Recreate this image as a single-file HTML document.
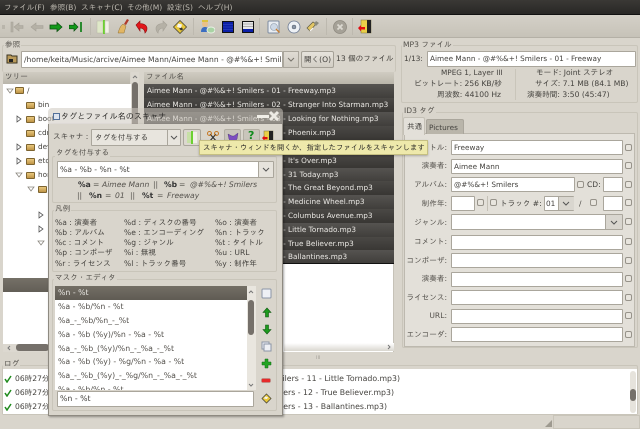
<!DOCTYPE html>
<html><head><meta charset="utf-8"><style>
html,body{margin:0;padding:0;background:#d9d5cc}
#r{position:relative;width:640px;height:429px;overflow:hidden;background:#d9d5cc;filter:blur(.3px);font-family:"DejaVu Sans","IPAGothic","Noto Sans CJK JP",sans-serif;font-size:7.3px;color:#45433f;text-rendering:geometricPrecision}
#r div,#r svg{position:absolute;box-sizing:border-box}
.t{white-space:nowrap;line-height:10px;height:10px}
.j{font-size:7.6px}
.in{background:#fff;border:1px solid #aaa69c;border-radius:1px}
.g{border:1px solid #c9c5ba;border-radius:2px}
.l{background:#d9d5cc;padding:0 1px;color:#55524d}
.ck{width:7px;height:7px;background:#e8e5de;border:1px solid #97938a;border-radius:2px}
.row{left:144px;width:250px;height:14px;background:linear-gradient(#555350,#403e3b);color:#e8e6e2;padding-left:3px;line-height:14px;white-space:nowrap;overflow:hidden}
.r2{background:linear-gradient(#4a4845,#383633)}
.sep{width:1px;background:#bdb9af}
.lb{text-align:right;width:50px;left:397px;color:#55524d}
.m{left:57px;color:#55524d;white-space:nowrap;line-height:10px;height:10px;font-size:7.8px}
.f{width:9px;height:7px;background:linear-gradient(#e8c87e,#bf9447);border:1px solid #7d6430;border-radius:1px}
.lg{font-size:7.8px}
.p{white-space:nowrap;line-height:10px;height:10px;color:#55524d;font-size:7.6px}
.pb{white-space:nowrap;line-height:10px;height:10px;color:#333;font-weight:bold;font-size:7.6px}
.pi{white-space:nowrap;line-height:10px;height:10px;color:#55524d;font-style:italic;font-size:7.6px}
</style></head><body><div id="r">

<!-- menubar -->
<div style="left:0;top:0;width:640px;height:15px;background:linear-gradient(#3a3835,#282725);border-bottom:1px solid #111"></div>
<div class="t j" style="left:4px;top:3px;color:#bdb9b0">ファイル(F)</div>
<div class="t j" style="left:50px;top:3px;color:#bdb9b0">参照(B)</div>
<div class="t j" style="left:81px;top:3px;color:#bdb9b0">スキャナ(C)</div>
<div class="t j" style="left:127px;top:3px;color:#bdb9b0">その他(M)</div>
<div class="t j" style="left:167px;top:3px;color:#bdb9b0">設定(S)</div>
<div class="t j" style="left:198px;top:3px;color:#bdb9b0">ヘルプ(H)</div>

<!-- toolbar -->
<div style="left:0;top:15px;width:640px;height:23px;background:linear-gradient(#d4d0c7,#c6c2b8);border-bottom:1px solid #b4b0a6"></div>
<div style="left:2px;top:25px;width:3px;height:4px;background:#b9b5ab"></div>
<svg style="left:10px;top:21px" width="14" height="12"><path d="M1 1h2v10H1zM4 6l5-4v2.5h4v3H9V10z" fill="#b5b1a6" stroke="#a5a197" stroke-width=".6"/></svg>
<svg style="left:30px;top:21px" width="14" height="12"><path d="M1 6l5-4v2.5h7v3H6V10z" fill="#b5b1a6" stroke="#a5a197" stroke-width=".6"/></svg>
<svg style="left:49px;top:21px" width="14" height="12"><path d="M13 6L8 1.5V4H1v4h7v2.5z" fill="#139a1a" stroke="#0b4f10" stroke-width=".8"/></svg>
<svg style="left:69px;top:21px" width="14" height="12"><path d="M9 6L5 2v2.2H0v3.6h5V10z" fill="#139a1a" stroke="#0b4f10" stroke-width=".7"/><rect x="11" y="1" width="2" height="10" fill="#2b8a30"/></svg>
<div class="sep" style="left:90px;top:18px;height:17px"></div>
<svg style="left:96px;top:19px" width="14" height="16"><rect x="1" y="2" width="6" height="12" fill="#dfe8c8" stroke="#b8b6a5" stroke-width=".5"/><rect x="7" y="1" width="2" height="14" fill="#6cd031"/><rect x="9" y="2" width="4" height="12" fill="#f1f0e6" stroke="#c3c1b2" stroke-width=".5"/></svg>
<svg style="left:116px;top:18px" width="14" height="16"><path d="M11 1l2 1-3 5-2-1z" fill="#b03a2a"/><path d="M7 6l3 2-2 7H2c1-3 2-7 5-9z" fill="#e2b664" stroke="#8f7035" stroke-width=".5"/></svg>
<svg style="left:135px;top:20px" width="14" height="14"><path d="M1 5l4-4v2.5c4 0 7 2 7 5 0 2-1 3.500-2 4.500 0-3-2-5-5-5V11z" fill="#e2161a" stroke="#8e0e10" stroke-width=".6"/></svg>
<svg style="left:154px;top:20px" width="14" height="14"><path d="M13 5L9 1v2.500c-4 0-7 2-7 5 0 2 1 3.500 2 4.500 0-3 2-5 5-5V11z" fill="#b5b1a6" stroke="#a5a197" stroke-width=".6"/></svg>
<svg style="left:173px;top:20px" width="14" height="14"><path d="M7 .5L13.500 7 7 13.500.5 7z" fill="#e9c83a" stroke="#4d4a38" stroke-width=".8"/><path d="M5 3.500L9 4.500 8 8 4 7z" fill="#f4f4f4"/><path d="M6 8.500l3-1 1 2-2 1z" fill="#333"/></svg>
<div class="sep" style="left:193px;top:18px;height:17px"></div>
<svg style="left:199px;top:18px" width="16" height="17"><circle cx="6" cy="6" r="3" fill="#eac188"/><path d="M3 4h6V2H3z" fill="#dcc23e"/><path d="M2 14c0-4 2-5 4-5s4 1 4 5z" fill="#3b6dc0"/><ellipse cx="12" cy="12" rx="4" ry="3" fill="#a9d3a4" stroke="#e8efe4"/></svg>
<svg style="left:222px;top:21px" width="12" height="12"><rect width="12" height="12" fill="#111"/><rect x="1" y="1" width="10" height="10" fill="#0c20a8"/><path d="M1 3.500h10M1 6h10M1 8.500h10" stroke="#3a4fc8" stroke-width=".6"/></svg>
<svg style="left:242px;top:21px" width="12" height="12"><rect width="12" height="12" fill="#111"/><rect x="1" y="1" width="10" height="7" fill="#e8e8e8"/><rect x="1" y="8" width="10" height="3" fill="#0c20a8"/><path d="M1 3h10M1 5.500h10" stroke="#777" stroke-width=".6"/></svg>
<div class="sep" style="left:259px;top:18px;height:17px"></div>
<svg style="left:267px;top:20px" width="14" height="14"><rect x="1" y="1" width="11" height="12" rx="1" fill="#e9edf2" stroke="#7d8ba0"/><circle cx="7" cy="7" r="3.500" fill="#cdd8e6" stroke="#8a97a8" stroke-width=".6"/><path d="M9 9l3.500 3.500" stroke="#c97d2d" stroke-width="1.400"/></svg>
<svg style="left:287px;top:20px" width="14" height="14"><circle cx="7" cy="7" r="6" fill="#eef1f5" stroke="#6a7890" stroke-width=".8"/><circle cx="7" cy="7" r="2" fill="#8c98a8" stroke="#505a68" stroke-width=".5"/></svg>
<svg style="left:306px;top:20px" width="14" height="14"><path d="M1 8l6-6 3 2-6 7z" fill="#e3c765" stroke="#5d5a42" stroke-width=".7"/><path d="M10 1l3 2-3 3-2-2z" fill="#8a8b7d"/><path d="M4 11l3-3" stroke="#fff"/></svg>
<div class="sep" style="left:326px;top:18px;height:17px"></div>
<svg style="left:333px;top:20px" width="14" height="14"><circle cx="7" cy="7" r="6.500" fill="#a5a197" stroke="#8f8b81" stroke-width=".8"/><path d="M4.500 4.500l5 5m0-5l-5 5" stroke="#dcd9d1" stroke-width="1.800"/></svg>
<div class="sep" style="left:352px;top:18px;height:17px"></div>
<svg style="left:358px;top:19px" width="14" height="15"><rect x="3" y="1" width="10" height="13" fill="#e9cf48" stroke="#7a7240" stroke-width=".5"/><rect x="9" y="1" width="4" height="13" fill="#222"/><path d="M0 9l3-3v2h4v2.500H3v2z" fill="#e00d10"/></svg>

<!-- browse group -->
<div class="g" style="left:2px;top:45px;width:394px;height:27px;border-bottom:0"></div>
<div class="t j l" style="left:4px;top:40px">参照</div>
<svg style="left:6px;top:54px" width="12" height="10"><path d="M1 1h4l1 1h5v7H1z" fill="#b99a5a" stroke="#3c3421"/><path d="M3 5h4v3H3z" fill="#222"/></svg>
<div class="t in" style="left:21px;top:51px;width:262px;height:17px;line-height:15px;padding-left:2px;overflow:hidden;background:#fff;font-size:7.6px">/home/keita/Music/arcive/Aimee Mann/Aimee Mann - @#%&amp;+! Smilers</div>
<div style="left:283px;top:51px;width:16px;height:17px;background:linear-gradient(#dfdbd3,#cfcbc2);border:1px solid #aaa69c"></div>
<svg style="left:287px;top:57px" width="8" height="5"><path d="M1 1l3 3 3-3" fill="none" stroke="#77736b"/></svg>
<div class="t j" style="left:301px;top:51px;width:33px;height:17px;line-height:15px;background:linear-gradient(#e6e3dc,#d2cec5);border:1px solid #a5a197;border-radius:2px;text-align:center">開く(O)</div>
<div class="t j" style="left:336px;top:54px">13 個のファイル</div>

<!-- tree -->
<div style="left:3px;top:72px;width:127px;height:12px;background:linear-gradient(#d0ccc2,#b9b5aa)"></div>
<div class="t j" style="left:5px;top:72px;color:#55524d">ツリー</div>
<div style="left:3px;top:84px;width:128px;height:268px;background:#fff"></div>
<div style="left:131px;top:72px;width:8px;height:280px;background:#dcd8d0"></div>
<div style="left:132px;top:82px;width:6px;height:210px;background:#75706a;border-radius:3px"></div>
<svg style="left:132px;top:74px" width="6" height="5"><path d="M1 4l2-2 2 2" fill="none" stroke="#777"/></svg>
<svg style="left:6px;top:88px" width="8" height="6"><path d="M1 1h6L4 5z" fill="#fff" stroke="#8a867e" stroke-width=".8"/></svg>
<div class="f" style="left:15px;top:87px"></div><div class="t" style="left:27px;top:86px">/</div>
<div class="f" style="left:26px;top:102px"></div><div class="t" style="left:38px;top:100px">bin</div>
<svg style="left:16px;top:115px" width="6" height="8"><path d="M1 1v6l4-3z" fill="#fff" stroke="#555" stroke-width=".8"/></svg>
<div class="f" style="left:26px;top:116px"></div><div class="t" style="left:38px;top:114px">boot</div>
<div class="f" style="left:26px;top:130px"></div><div class="t" style="left:38px;top:128px">cdrom</div>
<svg style="left:16px;top:143px" width="6" height="8"><path d="M1 1v6l4-3z" fill="#fff" stroke="#555" stroke-width=".8"/></svg>
<div class="f" style="left:26px;top:144px"></div><div class="t" style="left:38px;top:142px">dev</div>
<svg style="left:16px;top:157px" width="6" height="8"><path d="M1 1v6l4-3z" fill="#fff" stroke="#555" stroke-width=".8"/></svg>
<div class="f" style="left:26px;top:158px"></div><div class="t" style="left:38px;top:156px">etc</div>
<svg style="left:15px;top:172px" width="8" height="6"><path d="M1 1h6L4 5z" fill="#fff" stroke="#8a867e" stroke-width=".8"/></svg>
<div class="f" style="left:26px;top:172px"></div><div class="t" style="left:38px;top:170px">home</div>
<svg style="left:27px;top:186px" width="8" height="6"><path d="M1 1h6L4 5z" fill="#fff" stroke="#8a867e" stroke-width=".8"/></svg>
<div class="f" style="left:38px;top:186px"></div>
<svg style="left:38px;top:211px" width="6" height="8"><path d="M1 1v6l4-3z" fill="#fff" stroke="#555" stroke-width=".8"/></svg>
<svg style="left:38px;top:225px" width="6" height="8"><path d="M1 1v6l4-3z" fill="#fff" stroke="#555" stroke-width=".8"/></svg>
<svg style="left:37px;top:240px" width="8" height="6"><path d="M1 1h6L4 5z" fill="#fff" stroke="#8a867e" stroke-width=".8"/></svg>
<div style="left:3px;top:278px;width:127px;height:14px;background:linear-gradient(#757067,#625e56)"></div>
<div style="left:3px;top:344px;width:128px;height:8px;background:#dcd8d0"></div>
<div style="left:16px;top:344px;width:33px;height:7px;background:#75706a;border-radius:3px"></div>
<svg style="left:6px;top:345px" width="5" height="6"><path d="M4 1L2 3l2 2" fill="none" stroke="#777"/></svg>

<!-- file list -->
<div style="left:144px;top:72px;width:250px;height:12px;background:linear-gradient(#d0ccc2,#b9b5aa)"></div>
<div class="t j" style="left:146px;top:72px;color:#55524d">ファイル名</div>
<div style="left:144px;top:84px;width:250px;height:268px;background:#fff;border-right:1px solid #c6c2b8"></div>
<div class="row" style="top:84px">Aimee Mann - @#%&amp;+! Smilers - 01 - Freeway.mp3</div>
<div class="row r2" style="top:98px">Aimee Mann - @#%&amp;+! Smilers - 02 - Stranger Into Starman.mp3</div>
<div class="row" style="top:112px">Aimee Mann - @#%&amp;+! Smilers - 03 - Looking for Nothing.mp3</div>
<div class="row r2" style="top:126px">Aimee Mann - @#%&amp;+! Smilers - 04 - Phoenix.mp3</div>
<div class="row" style="top:140px">Aimee Mann - @#%&amp;+! Smilers - 05 - Stranger.mp3</div>
<div class="row r2" style="top:154px">Aimee Mann - @#%&amp;+! Smilers - 06 - It's Over.mp3</div>
<div class="row" style="top:168px">Aimee Mann - @#%&amp;+! Smilers - 07 - 31 Today.mp3</div>
<div class="row r2" style="top:181px">Aimee Mann - @#%&amp;+! Smilers - 08 - The Great Beyond.mp3</div>
<div class="row" style="top:195px">Aimee Mann - @#%&amp;+! Smilers - 09 - Medicine Wheel.mp3</div>
<div class="row r2" style="top:209px">Aimee Mann - @#%&amp;+! Smilers - 10 - Columbus Avenue.mp3</div>
<div class="row" style="top:223px">Aimee Mann - @#%&amp;+! Smilers - 11 - Little Tornado.mp3</div>
<div class="row r2" style="top:237px">Aimee Mann - @#%&amp;+! Smilers - 12 - True Believer.mp3</div>
<div class="row" style="top:250px;border-bottom:1px solid #111">Aimee Mann - @#%&amp;+! Smilers - 13 - Ballantines.mp3</div>
<div style="left:284px;top:343px;width:110px;height:8px;background:linear-gradient(#fff,#d9d6cf)"></div>
<svg style="left:387px;top:344px" width="5" height="6"><path d="M1 1l2 2-2 2" fill="none" stroke="#777"/></svg>
<div class="t" style="left:316px;top:353px;font-size:5px;color:#a5a197">III</div>

<!-- MP3 file -->
<div class="g" style="left:401px;top:45px;width:237px;height:58px"></div>
<div class="t j l" style="left:402px;top:40px">MP3 ファイル</div>
<div class="t" style="left:404px;top:54px">1/13:</div>
<div class="t in" style="left:427px;top:51px;width:209px;height:16px;line-height:14px;padding-left:2px">Aimee Mann - @#%&amp;+! Smilers - 01 - Freeway</div>
<div style="left:515px;top:69px;width:1px;height:31px;background:#c9c5ba"></div>
<div class="t" style="left:441px;top:68px">MPEG 1, Layer III</div>
<div class="t j" style="left:414px;top:79px">ビットレート: 256 KB/秒</div>
<div class="t j" style="left:437px;top:90px">周波数: 44100 Hz</div>
<div class="t j" style="left:536px;top:68px">モード: Joint ステレオ</div>
<div class="t j" style="left:535px;top:79px">サイズ: 7.1 MB (84.1 MB)</div>
<div class="t j" style="left:527px;top:90px">演奏時間: 3:50 (45:47)</div>

<!-- ID3 -->
<div class="g" style="left:402px;top:112px;width:236px;height:236px"></div>
<div class="t j l" style="left:403px;top:106px">ID3 タグ</div>
<div style="left:404px;top:133px;width:231px;height:214px;border:1px solid #bdb9af;background:#e3e0d9"></div>
<div style="left:426px;top:119px;width:38px;height:15px;background:#b9b5aa;border:1px solid #aaa69c;border-bottom:0;border-radius:2px 2px 0 0"></div>
<div class="t" style="left:429px;top:123px;color:#45433f">Pictures</div>
<div style="left:403px;top:117px;width:22px;height:18px;background:#e3e0d9;border:1px solid #c4c0b6;border-bottom:0;border-radius:2px 2px 0 0"></div>
<div class="t j" style="left:407px;top:122px">共通</div>

<div class="t j lb" style="top:143px">タイトル:</div>
<div class="t in" style="left:451px;top:140px;width:172px;height:15px;line-height:13px;padding-left:2px">Freeway</div>
<div class="ck" style="left:625px;top:144px"></div>
<div class="t j lb" style="top:161px">演奏者:</div>
<div class="t in" style="left:451px;top:159px;width:172px;height:15px;line-height:13px;padding-left:2px">Aimee Mann</div>
<div class="ck" style="left:625px;top:162px"></div>
<div class="t j lb" style="top:180px">アルバム:</div>
<div class="t in" style="left:451px;top:177px;width:124px;height:15px;line-height:13px;padding-left:2px">@#%&amp;+! Smilers</div>
<div class="ck" style="left:577px;top:181px"></div>
<div class="t j" style="left:587px;top:180px">CD:</div>
<div class="in" style="left:603px;top:177px;width:20px;height:15px"></div>
<div class="ck" style="left:625px;top:181px"></div>
<div class="t j lb" style="top:199px">制作年:</div>
<div class="in" style="left:451px;top:196px;width:24px;height:15px"></div>
<div class="ck" style="left:477px;top:199px"></div>
<div style="left:487px;top:196px;width:1px;height:15px;background:#c4c0b6"></div>
<div class="ck" style="left:490px;top:199px"></div>
<div class="t j" style="left:500px;top:199px">トラック #:</div>
<div class="t in" style="left:544px;top:196px;width:30px;height:15px;line-height:13px;padding-left:1px">01</div>
<div style="left:558px;top:197px;width:16px;height:13px;background:#d9d6cf;border-left:1px solid #aaa69c"></div>
<svg style="left:562px;top:201px" width="8" height="5"><path d="M1 1l3 3 3-3" fill="none" stroke="#555"/></svg>
<div class="t" style="left:579px;top:199px">/</div>
<div class="ck" style="left:590px;top:199px"></div>
<div class="in" style="left:603px;top:196px;width:20px;height:15px"></div>
<div class="ck" style="left:625px;top:199px"></div>
<div class="t j lb" style="top:218px">ジャンル:</div>
<div class="in" style="left:451px;top:214px;width:172px;height:16px"></div>
<div style="left:605px;top:215px;width:17px;height:14px;background:#d9d6cf;border-left:1px solid #aaa69c"></div>
<svg style="left:610px;top:220px" width="8" height="5"><path d="M1 1l3 3 3-3" fill="none" stroke="#555"/></svg>
<div class="ck" style="left:625px;top:218px"></div>
<div class="t j lb" style="top:237px">コメント:</div>
<div class="in" style="left:451px;top:235px;width:172px;height:15px"></div>
<div class="ck" style="left:625px;top:238px"></div>
<div class="t j lb" style="top:256px">コンポーザ:</div>
<div class="in" style="left:451px;top:253px;width:172px;height:15px"></div>
<div class="ck" style="left:625px;top:257px"></div>
<div class="t j lb" style="top:274px">演奏者:</div>
<div class="in" style="left:451px;top:272px;width:172px;height:15px"></div>
<div class="ck" style="left:625px;top:275px"></div>
<div class="t j lb" style="top:293px">ライセンス:</div>
<div class="in" style="left:451px;top:290px;width:172px;height:15px"></div>
<div class="ck" style="left:625px;top:294px"></div>
<div class="t j lb" style="top:311px">URL:</div>
<div class="in" style="left:451px;top:309px;width:172px;height:15px"></div>
<div class="ck" style="left:625px;top:312px"></div>
<div class="t j lb" style="top:330px">エンコーダ:</div>
<div class="in" style="left:451px;top:327px;width:172px;height:15px"></div>
<div class="ck" style="left:625px;top:331px"></div>

<!-- log -->
<div class="g" style="left:2px;top:365px;width:636px;height:50px"></div>
<div class="t j l" style="left:3px;top:359px">ログ</div>
<div style="left:3px;top:369px;width:634px;height:45px;background:#fff"></div>
<div class="t j" style="left:15px;top:374px">06時27分05秒</div>
<div class="t lg" style="right:240px;top:374px">Aimee Mann - @#%&amp;+! Smilers - 11 - Little Tornado.mp3)</div>
<svg style="left:4px;top:375px" width="8" height="8"><path d="M1 4l2 3 4-6" fill="none" stroke="#1f8a1c" stroke-width="1.500"/></svg>
<div class="t j" style="left:15px;top:388px">06時27分05秒</div>
<div class="t lg" style="right:246px;top:388px">Aimee Mann - @#%&amp;+! Smilers - 12 - True Believer.mp3)</div>
<svg style="left:4px;top:389px" width="8" height="8"><path d="M1 4l2 3 4-6" fill="none" stroke="#1f8a1c" stroke-width="1.500"/></svg>
<div class="t j" style="left:15px;top:402px">06時27分05秒</div>
<div class="t lg" style="right:253px;top:402px">Aimee Mann - @#%&amp;+! Smilers - 13 - Ballantines.mp3)</div>
<svg style="left:4px;top:403px" width="8" height="8"><path d="M1 4l2 3 4-6" fill="none" stroke="#1f8a1c" stroke-width="1.500"/></svg>
<div style="left:630px;top:371px;width:6px;height:42px;background:#e6e3dc;border-radius:3px"></div>
<div style="left:630px;top:389px;width:6px;height:12px;background:#75706a;border-radius:3px"></div>

<!-- status -->
<svg style="left:544px;top:419px" width="9" height="9"><path d="M8 1v7H1z" fill="#9e9a90"/></svg>
<div style="left:553px;top:415px;width:87px;height:14px;border:1px solid #c9c5ba"></div>

<!-- dialog title (translucent) -->
<div style="left:48px;top:108px;width:235px;height:17px;background:rgba(205,201,192,.55);border-radius:4px 4px 0 0"></div>
<svg style="left:53px;top:113px" width="7" height="7"><rect x=".5" y=".5" width="6" height="6" fill="#dde4ef" stroke="#52709a"/></svg>
<div class="t" style="left:61px;top:111px;color:#2b2a28;font-size:8.1px">タグとファイル名のスキャナ</div>
<div style="left:257px;top:115px;width:12px;height:3px;background:#f0eee8"></div>
<svg style="left:268px;top:110px" width="12" height="12"><path d="M2 2l8 8m0-8l-8 8" stroke="#eceae4" stroke-width="3"/></svg>

<!-- dialog -->
<div style="left:48px;top:124px;width:235px;height:292px;background:#d9d5cc;border:1px solid #8e8a81;border-top:0;box-shadow:1px 1px 2px rgba(0,0,0,.35)"></div>
<div class="t j" style="left:53px;top:132px;color:#45433f">スキャナ :</div>
<div class="t j in" style="left:91px;top:129px;width:90px;height:17px;line-height:15px;padding-left:3px;background:#e8e5de">タグを付与する</div>
<div style="left:167px;top:130px;width:1px;height:15px;background:#aaa69c"></div>
<svg style="left:170px;top:135px" width="8" height="5"><path d="M1 1l3 3 3-3" fill="none" stroke="#555"/></svg>
<div style="left:183px;top:129px;width:18px;height:17px;background:#dcd8cf;border:1px solid #aaa69c;border-radius:2px"></div>
<svg style="left:186px;top:131px" width="12" height="13"><rect x="1" y="1" width="4" height="11" fill="#c7e0a6"/><rect x="5" y="0" width="2" height="13" fill="#6cd031"/><rect x="7" y="1" width="4" height="11" fill="#f1f0e6"/></svg>
<svg style="left:207px;top:131px" width="12" height="12"><path d="M2 11l7-8M10 11L3 3" stroke="#333" stroke-width="1.200"/><circle cx="2.500" cy="2.500" r="2" fill="none" stroke="#c77822"/><circle cx="9.500" cy="2.500" r="2" fill="none" stroke="#c77822"/></svg>
<div style="left:224px;top:129px;width:17px;height:16px;background:#c9c5bb;border:1px solid #b2aea3;border-radius:2px"></div>
<svg style="left:227px;top:132px" width="12" height="11"><path d="M1 2l4 2h2l4-3-1 6-3 3H4L2 7z" fill="#7c4ec0" stroke="#45306e" stroke-width=".4"/></svg>
<div style="left:243px;top:129px;width:17px;height:16px;background:#c9c5bb;border:1px solid #b2aea3;border-radius:2px"></div>
<div class="t" style="left:248px;top:131px;font-size:11px;font-weight:bold;color:#128b1e">?</div>
<svg style="left:262px;top:130px" width="12" height="13"><rect x="2" y="1" width="9" height="11" fill="#e9cf48" stroke="#7a7240" stroke-width=".5"/><rect x="7" y="1" width="4" height="11" fill="#222"/><path d="M0 8l2.500-2.500v1.500h3v2.200h-3v1.500z" fill="#e00d10"/></svg>

<!-- tag group -->
<div class="g" style="left:52px;top:156px;width:225px;height:47px"></div>
<div class="t j l" style="left:55px;top:148px">タグを付与する</div>
<div class="t in" style="left:57px;top:161px;width:217px;height:17px;line-height:15px;padding-left:2px;font-size:7.7px">%a - %b - %n - %t</div>
<div style="left:258px;top:162px;width:15px;height:15px;background:#e6e3dc;border-left:1px solid #aaa69c"></div>
<svg style="left:262px;top:167px" width="8" height="5"><path d="M1 1l3 3 3-3" fill="none" stroke="#555"/></svg>
<div class="pb" style="left:78px;top:180px">%a</div><div class="p" style="left:93px;top:180px">=</div><div class="pi" style="left:102px;top:180px">Aimee Mann</div><div class="p" style="left:153px;top:180px">||</div><div class="pb" style="left:164px;top:180px">%b</div><div class="p" style="left:179px;top:180px">=</div><div class="pi" style="left:190px;top:180px">@#%&amp;+! Smilers</div>
<div class="p" style="left:77px;top:191px">||</div><div class="pb" style="left:89px;top:191px">%n</div><div class="p" style="left:105px;top:191px">=</div><div class="pi" style="left:115px;top:191px">01</div><div class="p" style="left:130px;top:191px">||</div><div class="pb" style="left:142px;top:191px">%t</div><div class="p" style="left:157px;top:191px">=</div><div class="pi" style="left:167px;top:191px">Freeway</div>

<!-- legend -->
<div class="g" style="left:52px;top:210px;width:225px;height:62px"></div>
<div class="t j l" style="left:54px;top:204px">凡例</div>
<div class="t j" style="left:55px;top:218px">%a : 演奏者</div><div class="t j" style="left:124px;top:218px">%d : ディスクの番号</div><div class="t j" style="left:215px;top:218px">%o : 演奏者</div>
<div class="t j" style="left:55px;top:228px">%b : アルバム</div><div class="t j" style="left:124px;top:228px">%e : エンコーディング</div><div class="t j" style="left:215px;top:228px">%n : トラック</div>
<div class="t j" style="left:55px;top:238px">%c : コメント</div><div class="t j" style="left:124px;top:238px">%g : ジャンル</div><div class="t j" style="left:215px;top:238px">%t : タイトル</div>
<div class="t j" style="left:55px;top:248px">%p : コンポーザ</div><div class="t j" style="left:124px;top:248px">%i : 無視</div><div class="t j" style="left:215px;top:248px">%u : URL</div>
<div class="t j" style="left:55px;top:259px">%r : ライセンス</div><div class="t j" style="left:124px;top:259px">%l : トラック番号</div><div class="t j" style="left:215px;top:259px">%y : 制作年</div>

<!-- mask editor -->
<div class="g" style="left:52px;top:279px;width:225px;height:132px"></div>
<div class="t j l" style="left:54px;top:273px">マスク・エディタ</div>
<div style="left:55px;top:286px;width:201px;height:104px;background:#fff;overflow:hidden"></div>
<div style="left:55px;top:286px;width:192px;height:14px;background:linear-gradient(#736e65,#5f5b53)"></div>
<div class="t" style="left:58px;top:288px;color:#e8e6e2;font-size:7.8px">%n - %t</div>
<div class="m" style="left:58px;top:302px">%a - %b/%n - %t</div>
<div class="m" style="left:58px;top:316px">%a_-_%b/%n_-_%t</div>
<div class="m" style="left:58px;top:330px">%a - %b (%y)/%n - %a - %t</div>
<div class="m" style="left:58px;top:344px">%a_-_%b_(%y)/%n_-_%a_-_%t</div>
<div class="m" style="left:58px;top:357px">%a - %b (%y) - %g/%n - %a - %t</div>
<div class="m" style="left:58px;top:371px">%a_-_%b_(%y)_-_%g/%n_-_%a_-_%t</div>
<div style="left:58px;top:385px;width:187px;height:5px;overflow:hidden;color:#55524d;line-height:10px;font-size:7.8px">%a - %b/%n - %t</div>
<div style="left:247px;top:286px;width:9px;height:104px;background:#e9e6df"></div>
<div style="left:248px;top:300px;width:6px;height:35px;background:#75706a;border-radius:3px"></div>
<svg style="left:248px;top:289px" width="6" height="5"><path d="M1 4l2-2 2 2" fill="none" stroke="#777"/></svg>
<svg style="left:248px;top:383px" width="6" height="5"><path d="M1 1l2 2 2-2" fill="none" stroke="#777"/></svg>
<div class="t in" style="left:57px;top:391px;width:197px;height:16px;line-height:14px;padding-left:2px;font-size:7.8px">%n - %t</div>
<svg style="left:261px;top:288px" width="11" height="11"><rect x="1" y="1" width="9" height="9" rx="1" fill="#eef0f5" stroke="#8b95a6"/></svg>
<svg style="left:262px;top:307px" width="10" height="11"><path d="M5 1L9 5.500H6.500V10h-3V5.500H1z" fill="#1d9a1e" stroke="#0f5a11" stroke-width=".6"/></svg>
<svg style="left:262px;top:324px" width="10" height="11"><path d="M5 10L9 5.500H6.500V1h-3v4.500H1z" fill="#1d9a1e" stroke="#0f5a11" stroke-width=".6"/></svg>
<svg style="left:261px;top:341px" width="11" height="11"><rect x="1" y="1" width="7" height="7" fill="#eef0f5" stroke="#8b95a6"/><rect x="3" y="3" width="7" height="7" fill="#eef0f5" stroke="#8b95a6"/></svg>
<svg style="left:261px;top:358px" width="11" height="11"><path d="M4 1h3v3h3v3H7v3H4V7H1V4h3z" fill="#22a322" stroke="#0f6b12" stroke-width=".5"/></svg>
<svg style="left:261px;top:378px" width="11" height="5"><rect x=".5" y=".5" width="9" height="4" rx="1" fill="#e62a2a" stroke="#a8908a" stroke-width=".5"/></svg>
<svg style="left:261px;top:393px" width="11" height="11"><path d="M5.500 1L10 5.500 5.500 10 1 5.500z" fill="#e9c83a" stroke="#4d4a38" stroke-width=".8"/><path d="M4 3.500l3 .5-1 2-3-.5z" fill="#f4f4f4"/></svg>

<!-- tooltip -->
<div class="t j" style="left:199px;top:140px;width:229px;height:15px;line-height:13px;background:#eee9ab;border:1px solid #c5bf82;color:#2d2c28;padding-left:3px;font-size:7.4px;box-shadow:0 1px 2px rgba(0,0,0,.25)">スキャナ・ウィンドを開くか、指定したファイルをスキャンします</div>
</div></body></html>
